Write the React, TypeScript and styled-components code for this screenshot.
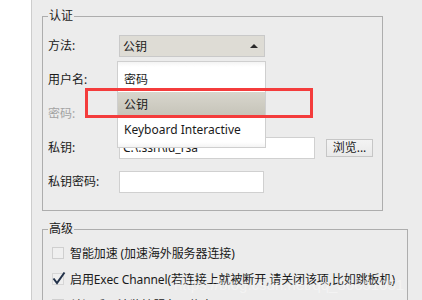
import React from 'react';
import styled, { createGlobalStyle } from 'styled-components';

const GlobalStyle = createGlobalStyle`
    body {
        margin: 0;
        font-family: "Noto Sans", "Noto Sans CJK SC", sans-serif;
        font-size: 12px;
        color: #1a1a1a;
    }
`;

const Page = styled.div`
    position: relative;
    display: flex;
    width: 422px;
    height: 300px;
    overflow: hidden;
    background-color: #ececec;
`;

const SideStrip = styled.div`
    width: 31px;
    flex-shrink: 0;
    background-color: #ffffff;
    border-right: 1px solid #cdcdcd;
`;

const Main = styled.div`
    display: flex;
    flex-direction: column;
    gap: 10px;
    padding: 8px 0 0 10px;
`;

const Group = styled.fieldset<{ $width: number; $padTop: number }>`
    box-sizing: border-box;
    width: ${p => p.$width}px;
    margin: 0;
    padding: ${p => p.$padTop}px 0 17px 5px;
    border: 1px solid #adadad;
    min-width: 0;
`;

const Caption = styled.legend`
    padding: 0 1px;
    margin-left: 0;
    line-height: 16px;
    font-size: 12px;
`;

const FormGrid = styled.div`
    display: grid;
    grid-template-columns: 71px auto;
    grid-auto-rows: 22px;
    row-gap: 12px;
    align-items: center;
`;

const Label = styled.span<{ $disabled?: boolean }>`
    color: ${p => (p.$disabled ? '#a3a3a3' : '#1a1a1a')};
    line-height: 22px;
`;

const ControlRow = styled.div`
    display: flex;
    align-items: center;
    gap: 11px;
    height: 22px;
`;

const SelectWrap = styled.div`
    position: relative;
    width: 146px;
    height: 22px;
`;

const SelectBox = styled.div`
    box-sizing: border-box;
    display: flex;
    align-items: center;
    justify-content: space-between;
    height: 22px;
    padding: 0 6px 0 3px;
    background-color: #dedcd5;
    border: 1px solid #c9c9c9;
`;

const Arrow = styled.span`
    width: 0;
    height: 0;
    border-left: 4px solid transparent;
    border-right: 4px solid transparent;
    border-bottom: 4px solid #2a2a2a;
`;

const DropList = styled.div`
    position: absolute;
    top: calc(100% + 4px);
    left: -2px;
    z-index: 2;
    box-sizing: border-box;
    width: 149px;
    padding: 5px 0;
    background: linear-gradient(#f4f4f4 0, #ffffff 5px, #ffffff calc(100% - 5px), #f4f4f4 100%);
    border: 1px solid #cfcfcf;
`;

const DropItem = styled.div<{ $active?: boolean }>`
    height: 25px;
    line-height: 25px;
    padding-left: 6px;
    white-space: nowrap;
    background: ${p => (p.$active ? 'linear-gradient(#d8d6cd, #c5c3b8)' : 'transparent')};
`;

const TextInput = styled.div<{ $width: number }>`
    box-sizing: border-box;
    width: ${p => p.$width}px;
    height: 22px;
    line-height: 20px;
    padding-left: 3px;
    background-color: #ffffff;
    border: 1px solid #d0d0d0;
    white-space: nowrap;
`;

const Button = styled.div`
    box-sizing: border-box;
    width: 47px;
    height: 18px;
    line-height: 16px;
    text-align: center;
    background: linear-gradient(#f3f3f3, #e9e9e9);
    border: 1px solid #c6c6c6;
`;

const OptionList = styled.div`
    display: flex;
    flex-direction: column;
    padding-left: 4px;
`;

const OptionRow = styled.div`
    display: flex;
    align-items: center;
    gap: 6px;
    height: 26px;
    white-space: nowrap;
    letter-spacing: -0.1px;
`;

const CheckBox = styled.span<{ $checked?: boolean }>`
    position: relative;
    box-sizing: border-box;
    width: 12px;
    height: 12px;
    flex-shrink: 0;
    background-color: #efefef;
    border: 1px solid ${p => (p.$checked ? '#d6d6d6' : '#cfcfcf')};
`;

const Tick = styled.svg`
    position: absolute;
    left: -1px;
    top: -3px;
`;

const Highlight = styled.div`
    position: absolute;
    left: 85px;
    top: 88px;
    width: 228px;
    height: 30px;
    box-sizing: border-box;
    border: 3px solid #f43c3c;
    z-index: 3;
`;

const Watermark = styled.div`
    position: absolute;
    left: 174px;
    top: 276px;
    font-family: "Liberation Sans", sans-serif;
    font-size: 15px;
    color: #ffffff;
    opacity: 0.4;
    white-space: nowrap;
    z-index: 4;
`;

const App = () => {
    return (
        <Page>
            <GlobalStyle />
            <SideStrip />
            <Main>
                <Group $width={341} $padTop={11}>
                    <Caption>认证</Caption>
                    <FormGrid>
                        <Label>方法:</Label>
                        <SelectWrap>
                            <SelectBox>
                                <span>公钥</span>
                                <Arrow />
                            </SelectBox>
                            <DropList>
                                <DropItem>密码</DropItem>
                                <DropItem $active>公钥</DropItem>
                                <DropItem>Keyboard Interactive</DropItem>
                            </DropList>
                        </SelectWrap>

                        <Label>用户名:</Label>
                        <TextInput $width={146} />

                        <Label $disabled>密码:</Label>
                        <TextInput $width={146} />

                        <Label>私钥:</Label>
                        <ControlRow>
                            <TextInput $width={196}>C:\.ssh\id_rsa</TextInput>
                            <Button>浏览...</Button>
                        </ControlRow>

                        <Label>私钥密码:</Label>
                        <TextInput $width={145} />
                    </FormGrid>
                </Group>

                <Group $width={366} $padTop={3}>
                    <Caption>高级</Caption>
                    <OptionList>
                        <OptionRow>
                            <CheckBox />
                            <span>智能加速 (加速海外服务器连接)</span>
                        </OptionRow>
                        <OptionRow>
                            <CheckBox $checked>
                                <Tick width="14" height="14" viewBox="0 0 14 14">
                                    <path d="M1.5 7.5 L5 12 L12.5 1.5" fill="none" stroke="#23324a" strokeWidth="2" />
                                </Tick>
                            </CheckBox>
                            <span>启用Exec Channel(若连接上就被断开,请关闭该项,比如跳板机)</span>
                        </OptionRow>
                        <OptionRow>
                            <CheckBox />
                            <span>关闭后无法监控服务器信息</span>
                        </OptionRow>
                    </OptionList>
                </Group>
            </Main>
            <Highlight />
            <Watermark>https://blog.csdn.net/qq_36651051</Watermark>
        </Page>
    );
};

export default App;
